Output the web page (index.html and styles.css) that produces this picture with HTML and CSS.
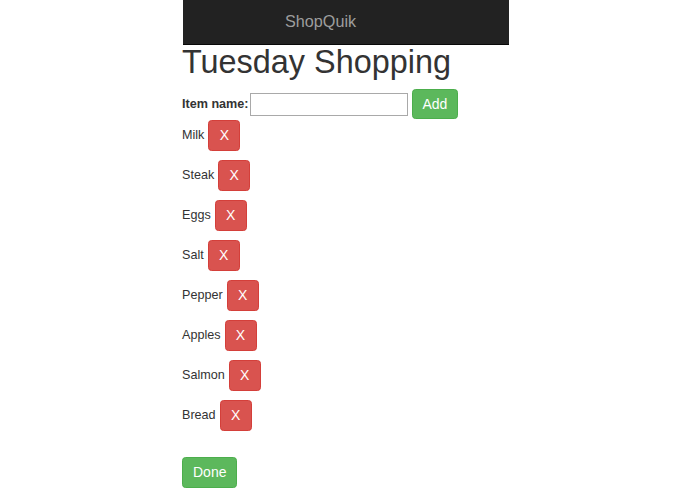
FILE: index.html
```html
<!DOCTYPE html>
<html>
<head>
<meta charset="utf-8">
<link rel="stylesheet" href="styles.css">
</head>
<body>
<div class="page">
  <header class="navbar"><span class="brand">ShopQuik</span></header>
  <h1 class="title">Tuesday Shopping</h1>
  <form class="add-form">
    <label class="add-label">Item name:</label><input class="add-input" type="text">
    <button type="button" class="btn btn-success">Add</button>
  </form>
  <ul class="items">
    <li class="item"><span class="item-name">Milk</span><button type="button" class="btn btn-danger">X</button></li>
    <li class="item"><span class="item-name">Steak</span><button type="button" class="btn btn-danger">X</button></li>
    <li class="item"><span class="item-name">Eggs</span><button type="button" class="btn btn-danger">X</button></li>
    <li class="item"><span class="item-name">Salt</span><button type="button" class="btn btn-danger">X</button></li>
    <li class="item"><span class="item-name">Pepper</span><button type="button" class="btn btn-danger">X</button></li>
    <li class="item"><span class="item-name">Apples</span><button type="button" class="btn btn-danger">X</button></li>
    <li class="item"><span class="item-name">Salmon</span><button type="button" class="btn btn-danger">X</button></li>
    <li class="item"><span class="item-name">Bread</span><button type="button" class="btn btn-danger">X</button></li>
  </ul>
  <button type="button" class="btn btn-success btn-done">Done</button>
</div>
</body>
</html>
```

FILE: styles.css
```css
html, body {
  margin: 0;
  padding: 0;
  background: #fff;
}
body {
  font-family: "Liberation Sans", Arial, sans-serif;
  font-size: 12.6px;
  color: #333;
}
.page {
  width: 327px;
  margin-left: 182px;
}
.navbar {
  margin-left: 1px;
  height: 44px;
  background: #222;
  border-bottom: 1px solid #080808;
  box-sizing: content-box;
  display: flex;
  align-items: center;
  padding-left: 102px;
}
.brand {
  color: #9d9d9d;
  font-size: 16.2px;
  line-height: 20px;
  padding-bottom: 2px;
}
.title {
  margin: 1px 0 0;
  font-size: 32.4px;
  font-weight: normal;
  line-height: 32px;
  color: #333;
}
.add-form {
  margin: 11px 0 0;
  display: flex;
  align-items: center;
  height: 30px;
}
.add-label {
  font-weight: bold;
  margin-right: 1px;
}
.add-input {
  width: 158px;
  height: 23px;
  box-sizing: border-box;
  border: 1px solid #a9a9a9;
  margin: 0 4px 0 0;
  padding: 1px 2px;
  font: inherit;
}
.btn {
  font-family: "Liberation Sans", Arial, sans-serif;
  font-size: 14px;
  line-height: 19px;
  padding: 0 10px;
  border: 1px solid transparent;
  border-radius: 3.6px;
  color: #fff;
  cursor: pointer;
}
.btn-success {
  background: #5cb85c;
  border-color: #4cae4c;
}
.btn-danger {
  background: #d9534f;
  border-color: #d43f3a;
}
.add-form .btn {
  height: 30px;
  padding: 0 10px;
}
.items {
  list-style: none;
  margin: 1px 0 0;
  padding: 0;
}
.item {
  display: flex;
  align-items: center;
  gap: 4px;
  height: 31px;
  margin-bottom: 9px;
}
.item-name {
  margin-bottom: 1px;
}
.item .btn {
  height: 31px;
  width: 32px;
  padding: 0;
}
.btn-done {
  margin-top: 17px;
  height: 31px;
  padding: 0 10px;
}
```
